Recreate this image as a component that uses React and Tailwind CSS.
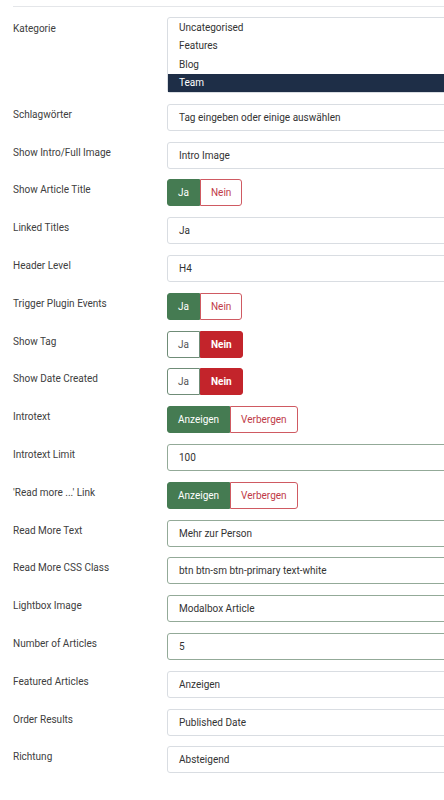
import React from 'react';

const rows = [
    { label: 'Schlagwörter', type: 'select', value: 'Tag eingeben oder einige auswählen' },
    { label: 'Show Intro/Full Image', type: 'select', value: 'Intro Image' },
    { label: 'Show Article Title', type: 'toggle', options: ['Ja', 'Nein'], active: 0 },
    { label: 'Linked Titles', type: 'select', value: 'Ja' },
    { label: 'Header Level', type: 'select', value: 'H4' },
    { label: 'Trigger Plugin Events', type: 'toggle', options: ['Ja', 'Nein'], active: 0 },
    { label: 'Show Tag', type: 'toggle', options: ['Ja', 'Nein'], active: 1 },
    { label: 'Show Date Created', type: 'toggle', options: ['Ja', 'Nein'], active: 1 },
    { label: 'Introtext', type: 'toggle', options: ['Anzeigen', 'Verbergen'], active: 0 },
    { label: 'Introtext Limit', type: 'input', value: '100' },
    { label: "'Read more ...' Link", type: 'toggle', options: ['Anzeigen', 'Verbergen'], active: 0 },
    { label: 'Read More Text', type: 'input', value: 'Mehr zur Person' },
    { label: 'Read More CSS Class', type: 'input', value: 'btn btn-sm btn-primary text-white' },
    { label: 'Lightbox Image', type: 'input', value: 'Modalbox Article' },
    { label: 'Number of Articles', type: 'input', value: '5' },
    { label: 'Featured Articles', type: 'select', value: 'Anzeigen' },
    { label: 'Order Results', type: 'select', value: 'Published Date' },
    { label: 'Richtung', type: 'select', value: 'Absteigend' },
];

const Toggle = ({ options, active }) => (
    <div className="flex h-[27px]">
        {options.map((opt, i) => {
            const isYes = i === 0;
            const on = i === active;
            let cls = '';
            if (isYes) {
                cls = on
                    ? 'bg-[#457b52] border-[#457b52] text-white'
                    : 'bg-white border-[#6f8c77] text-[#555]';
            } else {
                cls = on
                    ? 'bg-[#c3242b] border-[#c3242b] text-white font-bold'
                    : 'bg-white border-[#cf5a62] text-[#c03a48]';
            }
            return (
                <div
                    key={opt}
                    className={`flex items-center px-[10px] border ${cls} ${i === 0 ? 'rounded-l-[3px]' : 'rounded-r-[3px]'}`}
                >
                    {opt}
                </div>
            );
        })}
    </div>
);

const Field = ({ row }) => {
    if (row.type === 'toggle') return <Toggle options={row.options} active={row.active} />;
    const border = row.type === 'input' ? 'border-[#93aa98]' : 'border-[#d9dde2]';
    return (
        <div className={`h-[27px] w-[300px] flex items-center pl-[11px] bg-white border rounded-[3px] text-[#333] ${border}`}>
            {row.value}
        </div>
    );
};

export default function App() {
    return (
        <div className="w-[444px] h-[800px] overflow-hidden bg-white text-[10px] text-[#404040]" style={{ fontFamily: 'Roboto, "Liberation Sans", sans-serif' }}>
            <div className="ml-[13px] mt-[6px] border-t border-[#e4e6e9]" />
            <div className="flex flex-col gap-[10.8px] pl-[13px] pt-[10px]">
                <div className="flex">
                    <div className="w-[154px] shrink-0 pt-[4px]">Kategorie</div>
                    <div className="w-[300px] shrink-0 border border-[#d9dde2] rounded-[3px] text-[#333] bg-white">
                        <div className="h-[18.5px] flex items-center pl-[11px]">Uncategorised</div>
                        <div className="h-[18.5px] flex items-center pl-[11px]">Features</div>
                        <div className="h-[18.5px] flex items-center pl-[11px]">Blog</div>
                        <div className="h-[18.5px] flex items-center pl-[11px] bg-[#1e2e47] text-white">Team</div>
                    </div>
                </div>
                {rows.map((row) => (
                    <div key={row.label} className="flex">
                        <div className="w-[154px] shrink-0 pt-[5px] leading-[12px]">{row.label}</div>
                        <div className="shrink-0">
                            <Field row={row} />
                        </div>
                    </div>
                ))}
            </div>
        </div>
    );
}
